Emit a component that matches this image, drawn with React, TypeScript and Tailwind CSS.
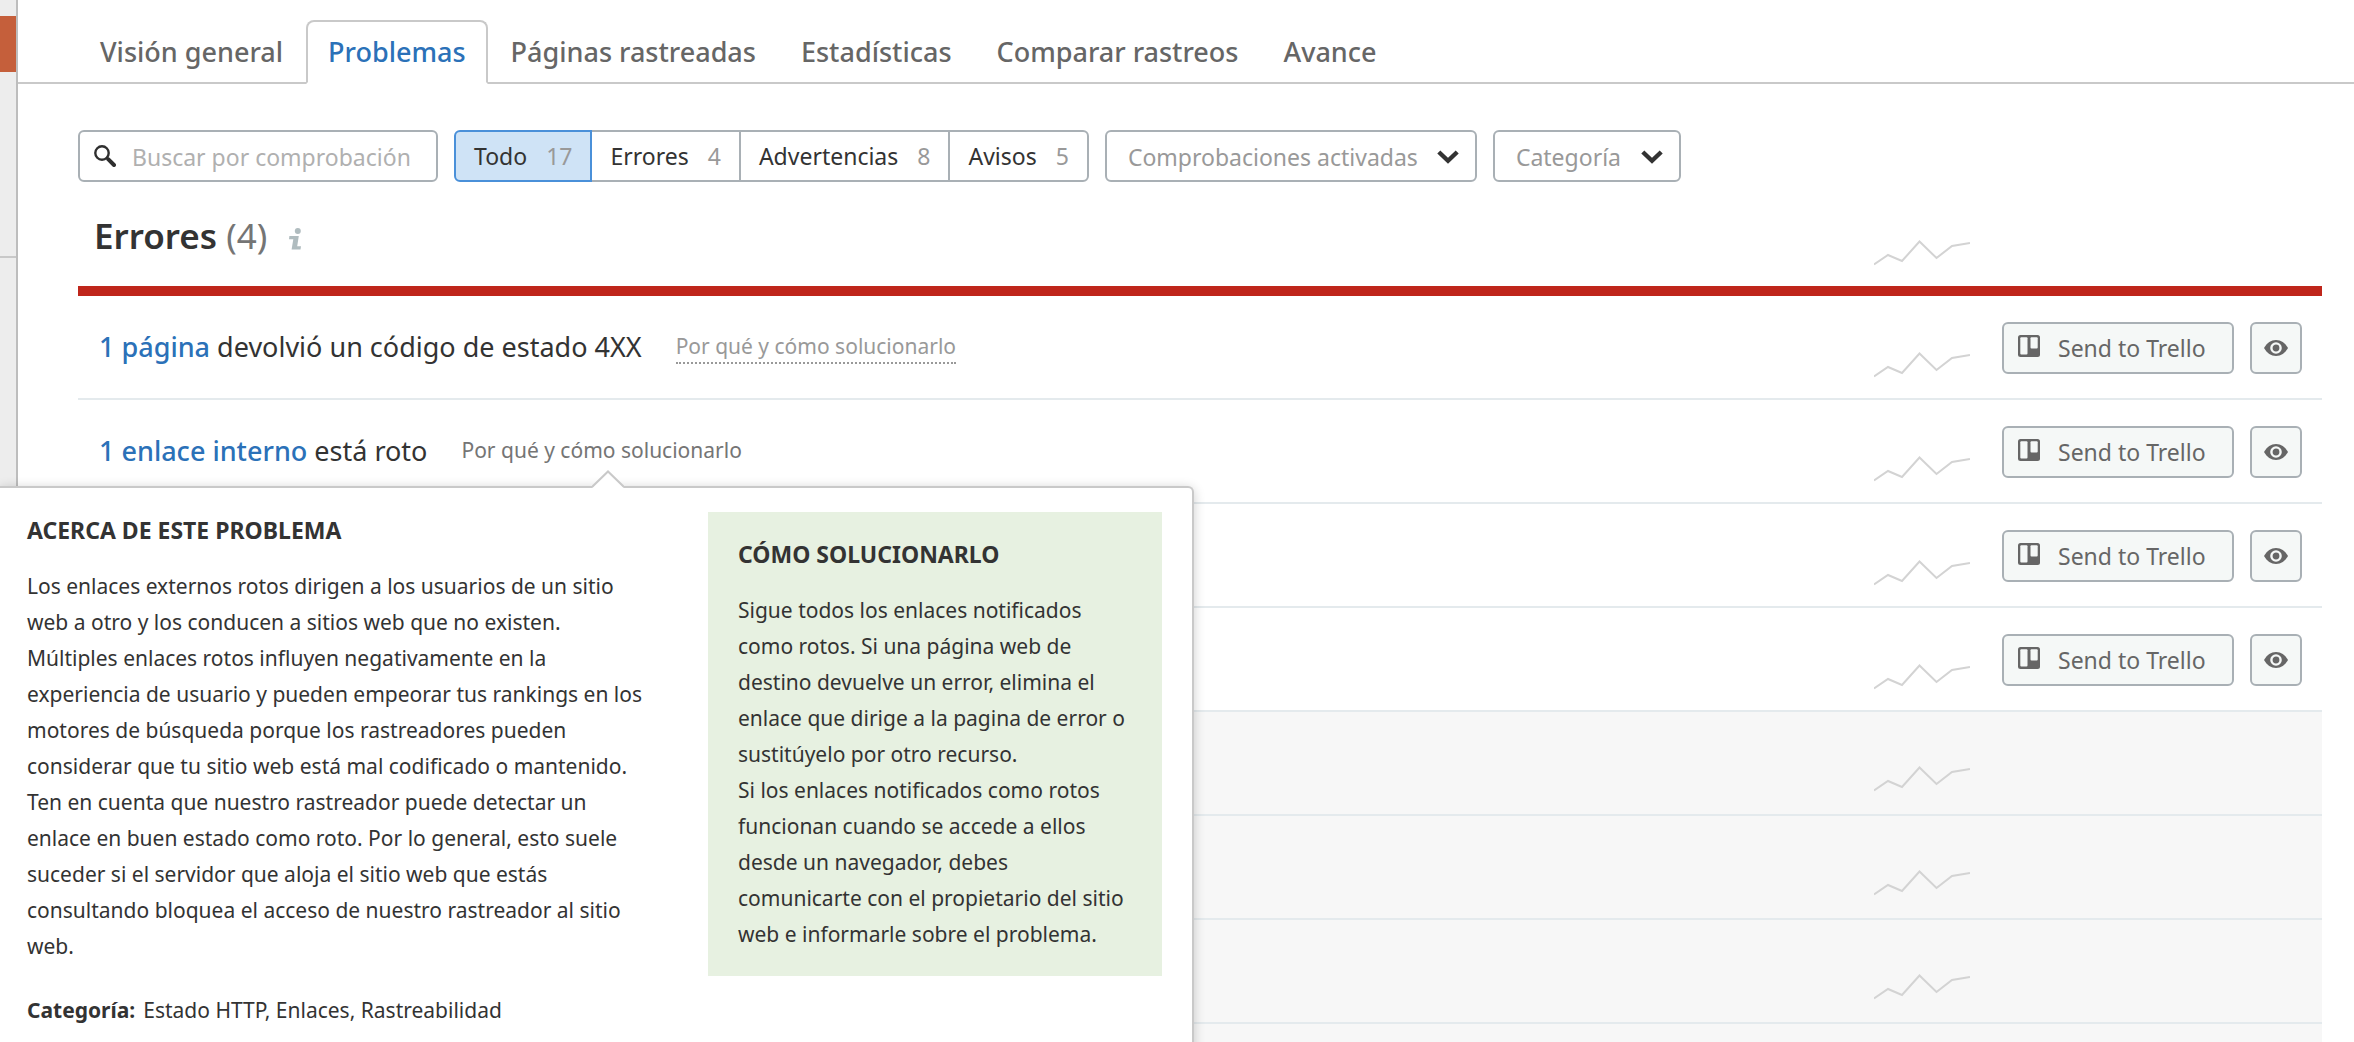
import { useState } from 'react';
import { clsx } from 'clsx';

const tabs = [
  'Visión general',
  'Problemas',
  'Páginas rastreadas',
  'Estadísticas',
  'Comparar rastreos',
  'Avance',
];

const filters = [
  { label: 'Todo', count: 17 },
  { label: 'Errores', count: 4 },
  { label: 'Advertencias', count: 8 },
  { label: 'Avisos', count: 5 },
];

type Issue = {
  id: number;
  link?: string;
  text?: string;
  open?: boolean;
  locked?: boolean;
};

const issues: Issue[] = [
  { id: 1, link: '1 página', text: 'devolvió un código de estado 4XX' },
  { id: 2, link: '1 enlace interno', text: 'está roto', open: true },
  { id: 3 },
  { id: 4 },
  { id: 5, locked: true },
  { id: 6, locked: true },
  { id: 7, locked: true },
  { id: 8, locked: true },
];

function SearchIcon() {
  return (
    <svg viewBox="0 0 22 22" className="h-[22px] w-[22px]" fill="none" stroke="#2f2f2f" aria-hidden="true">
      <circle cx="8" cy="8" r="6.7" strokeWidth="2.4" />
      <path d="M12.8 12.8 14 14" strokeWidth="2.6" />
      <path d="M14.4 14.4 20 20" strokeWidth="4" strokeLinecap="round" />
    </svg>
  );
}

function Chevron() {
  return (
    <svg
      viewBox="0 0 22 14"
      className="pointer-events-none absolute right-[18px] top-5 h-[14px] w-[22px]"
      fill="none"
      stroke="#333"
      strokeWidth="4.4"
      aria-hidden="true"
    >
      <path d="M1.8 2 11 10.8 20.2 2" />
    </svg>
  );
}

function InfoIcon() {
  return (
    <svg viewBox="0 0 12 22" className="h-[22px] w-3" fill="#b0bcbf" aria-hidden="true">
      <circle cx="8.8" cy="3" r="3" />
      <path d="M0.4 8h9.4L8.2 18.2H12l-.5 3.3H2.6l1.7-10.2H0z" />
    </svg>
  );
}

function TrelloIcon() {
  return (
    <svg viewBox="0 0 22 22" className="mb-1 h-[22px] w-[22px]" aria-hidden="true">
      <rect width="22" height="22" rx="2.5" fill="#666" />
      <rect x="2.3" y="2.3" width="7.2" height="17.2" rx="1" fill="#f5f8f7" />
      <rect x="12.5" y="2.3" width="7.2" height="11.2" rx="1" fill="#f5f8f7" />
    </svg>
  );
}

function EyeIcon() {
  return (
    <svg viewBox="0 0 24 16" className="h-4 w-6" aria-hidden="true">
      <path d="M0 8C3 2.8 7 0 12 0s9 2.8 12 8c-3 5.2-7 8-12 8S3 13.2 0 8z" fill="#666" />
      <circle cx="12" cy="8" r="4.6" fill="#666" stroke="#f5f8f7" strokeWidth="2.4" />
    </svg>
  );
}

function Sparkline() {
  return (
    <svg viewBox="0 0 96 26" className="h-[26px] w-24 shrink-0" fill="none" stroke="#d3d3d3" strokeWidth="2" aria-hidden="true">
      <path d="M0 24.5 14 15 28 21 45.5 1.5 62.5 18 78 6 96 3" />
    </svg>
  );
}

function FilterSelect({ label, className }: { label: string; className?: string }) {
  return (
    <div className="relative">
      <select
        aria-label={label}
        className={clsx(
          'h-[52px] appearance-none rounded-md border-2 border-[#a9b0b5] bg-white pl-[21px] pt-[2px] text-[23px] text-[#999]',
          className,
        )}
      >
        <option>{label}</option>
      </select>
      <Chevron />
    </div>
  );
}

function IssuePopover() {
  return (
    <div className="absolute -left-[78px] top-[86px] z-10 flex w-[1194px] items-start justify-between rounded-tr-md border-r-2 border-t-2 border-[#c9c9c9] bg-white pb-10 pl-[27px] pr-[30px] pt-6 text-[21px] leading-9 text-[#333] shadow-[0_2px_12px_rgba(0,0,0,0.2)]">
      <svg viewBox="0 0 32 18" className="absolute -top-[18px] left-[592px] h-[18px] w-8" aria-hidden="true">
        <path d="M0 18 16 1.5 32 18z" fill="#fff" />
        <path d="M0 17 16 1.5 32 17" fill="none" stroke="#c9c9c9" strokeWidth="2" />
      </svg>
      <div className="w-[624px]">
        <h3 className="mb-5 text-[23px] leading-9 font-bold uppercase">Acerca de este problema</h3>
        <p className="mb-7">
          Los enlaces externos rotos dirigen a los usuarios de un sitio web a otro y los conducen a sitios web que no
          existen.
          <br />
          Múltiples enlaces rotos influyen negativamente en la experiencia de usuario y pueden empeorar tus rankings en
          los motores de búsqueda porque los rastreadores pueden considerar que tu sitio web está mal codificado o
          mantenido.
          <br />
          Ten en cuenta que nuestro rastreador puede detectar un enlace en buen estado como roto. Por lo general, esto
          suele suceder si el servidor que aloja el sitio web que estás consultando bloquea el acceso de nuestro
          rastreador al sitio web.
        </p>
        <p>
          <strong className="mr-2 font-bold">Categoría:</strong>
          Estado HTTP, Enlaces, Rastreabilidad
        </p>
      </div>
      <div className="w-[454px] bg-[#e7f1e1] px-[30px] py-6">
        <h3 className="mb-5 text-[23px] leading-9 font-bold uppercase">Cómo solucionarlo</h3>
        <p>
          Sigue todos los enlaces notificados como rotos. Si una página web de destino devuelve un error, elimina el
          enlace que dirige a la pagina de error o sustitúyelo por otro recurso.
          <br />
          Si los enlaces notificados como rotos funcionan cuando se accede a ellos desde un navegador, debes
          comunicarte con el propietario del sitio web e informarle sobre el problema.
        </p>
      </div>
    </div>
  );
}

function IssueRow({ issue }: { issue: Issue }) {
  const { link, text, open, locked } = issue;

  return (
    <li className={clsx('relative flex h-[104px] border-b-2 border-[#e4eaed] pr-5', locked && 'bg-[#f7f7f7]')}>
      {link && (
        <div className="flex items-center gap-[34px] pl-[21px]">
          <p className="text-[27px] text-[#333]">
            <a href="#" className="font-medium text-[#2b71b8]">
              {link}
            </a>{' '}
            {text}
          </p>
          <button
            type="button"
            className={clsx(
              'border-b-2 text-[21px] leading-8',
              open ? 'border-transparent text-[#757575]' : 'border-dotted border-[#999] text-[#999]',
            )}
          >
            Por qué y cómo solucionarlo
          </button>
        </div>
      )}
      <div className={clsx('ml-auto flex items-end', locked ? 'pb-[22px]' : 'pb-5')}>
        <Sparkline />
      </div>
      <div className="ml-8 flex w-[300px] items-center justify-between pt-[2px]">
        {!locked && (
          <>
            <button
              type="button"
              className="flex h-[52px] w-[232px] items-center gap-[18px] rounded-md border-2 border-[#a9b0b5] bg-[#f5f8f7] pl-[14px] text-[23px] text-[#666]"
            >
              <TrelloIcon />
              Send to Trello
            </button>
            <button
              type="button"
              aria-label="Ocultar"
              className="flex h-[52px] w-[52px] items-center justify-center rounded-md border-2 border-[#a9b0b5] bg-[#f5f8f7]"
            >
              <EyeIcon />
            </button>
          </>
        )}
      </div>
      {open && <IssuePopover />}
    </li>
  );
}

export default function App() {
  const [filter, setFilter] = useState('Todo');

  return (
    <div className="flex h-screen overflow-hidden bg-white font-['Noto_Sans','Open_Sans',sans-serif]">
      <aside className="w-[18px] shrink-0 border-r-2 border-[#bdbdbd] bg-[#ededed] pt-4">
        <div className="h-14 bg-[#c55f3b]" />
        <div className="mt-[184px] h-[2px] bg-[#c8c8c8]" />
      </aside>

      <main className="min-w-0 flex-1">
        <nav className="flex gap-px border-b-2 border-[#c9c9c9] pl-[60px] pt-5">
          {tabs.map(tab => (
            <a
              key={tab}
              href="#"
              className={clsx(
                '-mb-[2px] h-16 rounded-t-lg border-2 px-5 text-[27px] leading-[60px] font-medium',
                tab === 'Problemas'
                  ? 'border-[#c9c9c9] border-b-white bg-white text-[#2b71b8]'
                  : 'border-transparent text-[#666]',
              )}
            >
              {tab}
            </a>
          ))}
        </nav>

        <div className="pl-[60px] pr-8 pt-[46px]">
          <div className="flex gap-4">
            <label className="flex h-[52px] w-[360px] items-center gap-4 rounded-md border-2 border-[#a9b0b5] pl-[14px]">
              <SearchIcon />
              <input
                type="text"
                aria-label="Buscar por comprobación"
                placeholder="Buscar por comprobación"
                className="min-w-0 flex-1 pt-[2px] text-[23px] outline-none placeholder:text-[#b0b0b0]"
              />
            </label>

            <div className="flex">
              {filters.map(({ label, count }) => (
                <button
                  key={label}
                  type="button"
                  onClick={() => setFilter(label)}
                  className={clsx(
                    '-ml-[2px] flex h-[52px] items-center gap-[19px] border-2 px-[18px] text-[23px] text-[#333] first:ml-0 first:rounded-l-md last:rounded-r-md',
                    filter === label ? 'z-1 border-[#4a90d9] bg-[#cfe3f6]' : 'border-[#a9b0b5] bg-white',
                  )}
                >
                  {label}
                  <span className="text-[#999]">{count}</span>
                </button>
              ))}
            </div>

            <FilterSelect label="Comprobaciones activadas" className="w-[372px]" />
            <FilterSelect label="Categoría" className="w-[188px]" />
          </div>

          <section>
            <header className="flex h-[114px] items-end border-b-10 border-[#bf261b] pb-5 pl-4 pr-[352px]">
              <h2 className="mb-[6px] text-[35px] leading-[48px] font-semibold text-[#333]">
                Errores <span className="font-normal text-[#757575]">(4)</span>
              </h2>
              <button type="button" aria-label="Información" className="mb-4 ml-[22px]">
                <InfoIcon />
              </button>
              <div className="ml-auto">
                <Sparkline />
              </div>
            </header>
            <ul>
              {issues.map(issue => (
                <IssueRow key={issue.id} issue={issue} />
              ))}
            </ul>
          </section>
        </div>
      </main>
    </div>
  );
}
